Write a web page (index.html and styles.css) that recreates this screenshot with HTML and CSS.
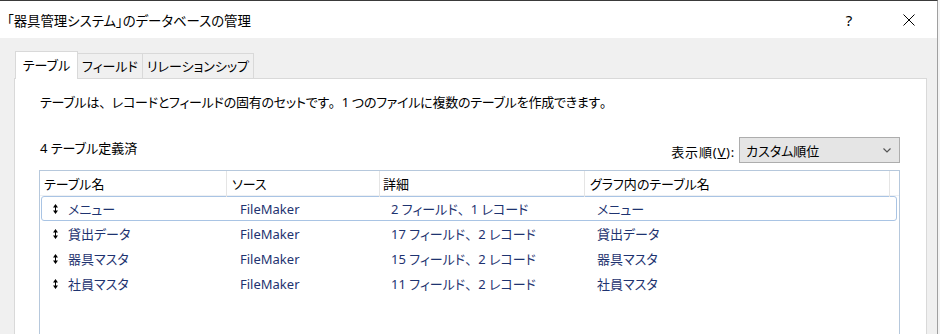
FILE: index.html
```html
<!DOCTYPE html>
<html>

<head>
    <meta charset="UTF-8">
    <title>データベースの管理</title>
    <link rel="stylesheet" href="styles.css">
</head>
<body>
    <div class="window">
        <div class="titlebar">
            <span class="title">「器具管理システム」のデータベースの管理</span>
            <span class="help">?</span>
            <span class="close">
                <svg width="12" height="12" viewBox="0 0 12 12"><path d="M0.5 0.5 L11.5 11.5 M11.5 0.5 L0.5 11.5" stroke="#000" stroke-width="1" fill="none"/></svg>
            </span>
        </div>

        <div class="content">
            <div class="tabs">
                <div class="tab active">テーブル</div>
                <div class="tab t2">フィールド</div>
                <div class="tab t3">リレーションシップ</div>
            </div>

            <div class="panel">
                <p class="desc">テーブルは<span class="p">、</span>レコードとフィールドの固有のセットです<span class="p">。</span>1 つのファイルに複数のテーブルを作成できます<span class="p">。</span></p>

                <div class="toolbar">
                    <span class="count">4 テーブル定義済</span>
                    <span class="order">表示順(<u>V</u>):</span>
                    <div class="select">
                        <span>カスタム順位</span>
                        <svg width="8" height="5" viewBox="0 0 8 5"><path d="M0.5 0.5 L4 4 L7.5 0.5" stroke="#555" stroke-width="1.2" fill="none"/></svg>
                    </div>
                </div>

                <div class="list">
                    <div class="list-head">
                        <div class="hcell c1">テーブル名</div>
                        <div class="hcell c2">ソース</div>
                        <div class="hcell c3">詳細</div>
                        <div class="hcell c4">グラフ内のテーブル名</div>
                        <div class="hcell filler"></div>
                    </div>

                    <div class="row selected">
                        <div class="cell c1"><svg class="grip" width="5" height="10" viewBox="0 0 5 10"><path d="M2.5 0 L5 3.5 L0 3.5 Z M2.5 10 L5 6.5 L0 6.5 Z" fill="#000"/><rect x="2" y="3" width="1" height="4" fill="#000"/></svg>メニュー</div>
                        <div class="cell c2">FileMaker</div>
                        <div class="cell c3">2 フィールド<span class="p">、</span>1 レコード</div>
                        <div class="cell c4">メニュー</div>
                    </div>
                    <div class="row">
                        <div class="cell c1"><svg class="grip" width="5" height="10" viewBox="0 0 5 10"><path d="M2.5 0 L5 3.5 L0 3.5 Z M2.5 10 L5 6.5 L0 6.5 Z" fill="#000"/><rect x="2" y="3" width="1" height="4" fill="#000"/></svg>貸出データ</div>
                        <div class="cell c2">FileMaker</div>
                        <div class="cell c3">17 フィールド<span class="p">、</span>2 レコード</div>
                        <div class="cell c4">貸出データ</div>
                    </div>
                    <div class="row">
                        <div class="cell c1"><svg class="grip" width="5" height="10" viewBox="0 0 5 10"><path d="M2.5 0 L5 3.5 L0 3.5 Z M2.5 10 L5 6.5 L0 6.5 Z" fill="#000"/><rect x="2" y="3" width="1" height="4" fill="#000"/></svg>器具マスタ</div>
                        <div class="cell c2">FileMaker</div>
                        <div class="cell c3">15 フィールド<span class="p">、</span>2 レコード</div>
                        <div class="cell c4">器具マスタ</div>
                    </div>
                    <div class="row">
                        <div class="cell c1"><svg class="grip" width="5" height="10" viewBox="0 0 5 10"><path d="M2.5 0 L5 3.5 L0 3.5 Z M2.5 10 L5 6.5 L0 6.5 Z" fill="#000"/><rect x="2" y="3" width="1" height="4" fill="#000"/></svg>社員マスタ</div>
                        <div class="cell c2">FileMaker</div>
                        <div class="cell c3">11 フィールド<span class="p">、</span>2 レコード</div>
                        <div class="cell c4">社員マスタ</div>
                    </div>
                </div>
            </div>
        </div>
    </div>
</body>

</html>
```

FILE: styles.css
```css
html, body {
    margin: 0;
}

body {
    width: 940px;
    height: 334px;
    overflow: hidden;
    background: #f4f4f4;
    font-family: "Noto Sans", "Noto Sans CJK JP", sans-serif;
    font-feature-settings: "palt";
    font-size: 13px;
    color: #000;
}

/* full-width punctuation, like the system UI font */
.p {
    font-feature-settings: normal;
}

.window {
    width: 938px;
    height: 334px;
    box-sizing: border-box;
    border-top: 1px solid #3a3a3a;
    border-right: 1px solid #a0a0a0;
    background: #f0f0f0;
    display: flex;
    flex-direction: column;
    overflow: hidden;
}

/* title bar */
.titlebar {
    height: 37px;
    flex-shrink: 0;
    background: #fff;
    display: flex;
    align-items: center;
    padding-left: 7px;
}

.title {
    font-size: 13.4px;
    flex: 1;
}

.help {
    font-size: 15px;
    width: 14px;
    margin-right: 47px;
    text-align: center;
}

.close {
    display: flex;
    margin-right: 22px;
}

/* tabs */
.content {
    padding: 13px 10px 0 14px;
    flex: 1;
}

.tabs {
    display: flex;
    align-items: flex-end;
    padding-left: 1px;
}

.tab {
    height: 25px;
    line-height: 24px;
    box-sizing: border-box;
    text-align: center;
    border: 1px solid #d9d9d9;
    border-left: none;
    border-bottom: none;
    background: #f0f0f0;
}

.tab.active {
    width: 63px;
    height: 28px;
    line-height: 26px;
    margin-bottom: -1px;
    border-left: 1px solid #d9d9d9;
    background: #fff;
    position: relative;
    z-index: 1;
}

.tab.t2 {
    width: 65px;
}

.tab.t3 {
    width: 111px;
}

.panel {
    background: #fff;
    border: 1px solid #d9d9d9;
    height: 300px;
    padding: 0 26px 0 24px;
}

.desc {
    margin: 14px 0 0 1px;
    line-height: 18px;
    letter-spacing: -0.25px;
}

.toolbar {
    display: flex;
    align-items: flex-start;
    margin-top: 26px;
}

.count {
    flex: 1;
    line-height: 18px;
    margin: 2px 0 0 1px;
}

.order {
    line-height: 18px;
    margin: 6px 4px 0 0;
    letter-spacing: 0.8px;
}

.select {
    width: 161px;
    height: 26px;
    box-sizing: border-box;
    border: 1px solid #adadad;
    background: #e5e5e5;
    display: flex;
    align-items: center;
    justify-content: space-between;
    padding: 0 8px 0 6px;
}

/* table list */
.list {
    margin-top: 7px;
    height: 200px;
    border: 1px solid #b6c8dc;
}

.list-head {
    display: grid;
    grid-template-columns: 187px 153px 205px 305px 1fr;
    height: 24px;
    border-bottom: 1px solid #eef0f3;
}

.hcell {
    border-right: 1px solid #e5e5e5;
    line-height: 26px;
    padding-left: 5px;
    white-space: nowrap;
}

.hcell.c1 {
    padding-left: 4px;
}

.hcell.c3 {
    padding-left: 3px;
}

.hcell.filler {
    border-right: none;
}

.row {
    display: grid;
    grid-template-columns: 184px 153px 205px 305px;
    height: 25px;
    box-sizing: border-box;
    margin: 0 2px 0 1px;
    border: 1px solid transparent;
    color: #1e3370;
    align-items: center;
    white-space: nowrap;
}

.row:first-of-type {
    margin-top: 1px;
}

.row.selected {
    border-color: #a9c4e4;
    border-radius: 3px;
}

.cell.c1 {
    display: flex;
    align-items: center;
    padding-left: 11px;
}

.grip {
    margin-right: 10px;
}

.cell.c2 {
    padding-left: 14px;
}

.cell.c3 {
    padding-left: 12px;
}

.cell.c4 {
    padding-left: 13px;
}
```
